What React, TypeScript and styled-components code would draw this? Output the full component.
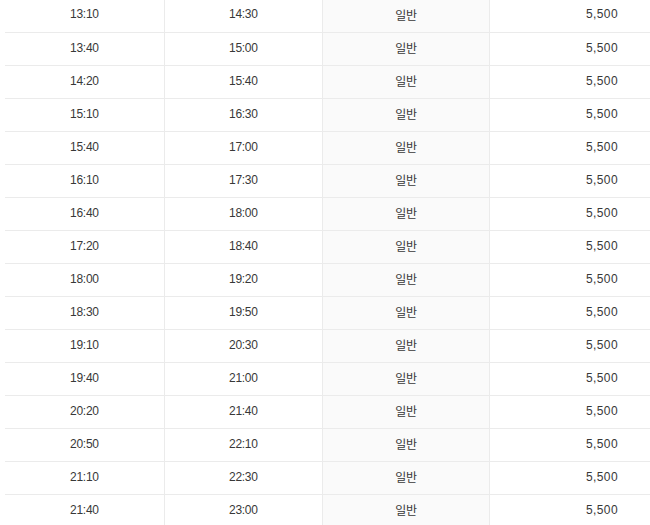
import React from "react";
import styled, { createGlobalStyle } from "styled-components";

// 시간표 데이터 (출발, 도착, 등급, 요금)
const rows = [
	["13:10", "14:30"],
	["13:40", "15:00"],
	["14:20", "15:40"],
	["15:10", "16:30"],
	["15:40", "17:00"],
	["16:10", "17:30"],
	["16:40", "18:00"],
	["17:20", "18:40"],
	["18:00", "19:20"],
	["18:30", "19:50"],
	["19:10", "20:30"],
	["19:40", "21:00"],
	["20:20", "21:40"],
	["20:50", "22:10"],
	["21:10", "22:30"],
	["21:40", "23:00"],
].map(([dep, arr]) => ({ dep, arr, grade: "일반", fare: "5,500" }));

const GlobalStyle = createGlobalStyle`
	body {
		margin: 0;
		background: #fff;
		overflow: hidden;
	}
`;

const Wrap = styled.div`
	padding-left: 5px;
	width: 645px;
	margin-top: -1px;
`;

const Table = styled.table`
	width: 100%;
	border-collapse: collapse;
	table-layout: fixed;
	font-family: "Liberation Sans", "Noto Sans CJK KR", sans-serif;
	font-size: 12px;
	color: #383838;
`;

const Col = styled.col<{ $w: number }>`
	width: ${(p) => p.$w}px;
`;

const Row = styled.tr`
	height: 33px;
`;

const Cell = styled.td<{ $shade?: boolean; $right?: boolean; $first?: boolean }>`
	padding: 0 ${(p) => (p.$right ? "32px" : "0")} 2px 0;
	text-align: ${(p) => (p.$right ? "right" : "center")};
	vertical-align: middle;
	border-bottom: 1px solid #ebebeb;
	border-left: ${(p) => (p.$first ? "none" : "1px solid #ebebeb")};
	background: ${(p) => (p.$shade ? "#fafafa" : "#fff")};
	letter-spacing: ${(p) => (p.$right ? "0.4px" : "-0.3px")};
`;

export default function App() {
	return (
		<>
			<GlobalStyle />
			<Wrap>
				<Table>
					<colgroup>
						<Col $w={159} />
						<Col $w={158} />
						<Col $w={167} />
						<Col $w={160} />
					</colgroup>
					<tbody>
						{rows.map((r) => (
							<Row key={r.dep}>
								<Cell $first>{r.dep}</Cell>
								<Cell>{r.arr}</Cell>
								<Cell $shade>{r.grade}</Cell>
								<Cell $right>{r.fare}</Cell>
							</Row>
						))}
					</tbody>
				</Table>
			</Wrap>
		</>
	);
}
